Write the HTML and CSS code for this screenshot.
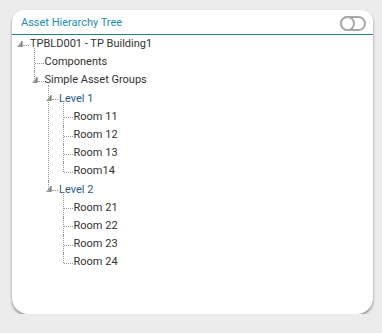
FILE: index.html
```html
<!DOCTYPE html>
<html lang="en">
<head>
  <meta charset="UTF-8" />
  <meta name="viewport" content="width=device-width, initial-scale=1.0"/>
  <title>Asset Hierarchy Tree</title>
  <link rel="stylesheet" href="styles.css">
</head>
<body>

  <div class="card">
    <div class="card-head">
      <span class="card-title">Asset Hierarchy Tree</span>
      <span class="toggle"><span class="knob"></span></span>
    </div>

    <ul class="tree">
      <li>
        <div class="row"><span class="twig"><svg class="exp" width="6" height="6" viewBox="0 0 6 6"><polygon points="5,0 5,6 0,6" fill="#9a9a9a"/><rect x="4.5" y="0" width="1" height="6" fill="#666"/></svg></span><span class="label">TPBLD001 - TP Building1</span></div>
        <ul>
          <li><div class="row"><span class="twig leaf"></span><span class="label">Components</span></div></li>
          <li>
            <div class="row"><span class="twig"><svg class="exp" width="6" height="6" viewBox="0 0 6 6"><polygon points="5,0 5,6 0,6" fill="#9a9a9a"/><rect x="4.5" y="0" width="1" height="6" fill="#666"/></svg></span><span class="label">Simple Asset Groups</span></div>
            <ul>
              <li>
                <div class="row"><span class="twig"><svg class="exp" width="6" height="6" viewBox="0 0 6 6"><polygon points="5,0 5,6 0,6" fill="#9a9a9a"/><rect x="4.5" y="0" width="1" height="6" fill="#666"/></svg></span><span class="label level">Level 1</span></div>
                <ul>
                  <li><div class="row"><span class="twig leaf"></span><span class="label">Room 11</span></div></li>
                  <li><div class="row"><span class="twig leaf"></span><span class="label">Room 12</span></div></li>
                  <li><div class="row"><span class="twig leaf"></span><span class="label">Room 13</span></div></li>
                  <li><div class="row"><span class="twig leaf"></span><span class="label">Room14</span></div></li>
                </ul>
              </li>
              <li>
                <div class="row"><span class="twig"><svg class="exp" width="6" height="6" viewBox="0 0 6 6"><polygon points="5,0 5,6 0,6" fill="#9a9a9a"/><rect x="4.5" y="0" width="1" height="6" fill="#666"/></svg></span><span class="label level">Level 2</span></div>
                <ul>
                  <li><div class="row"><span class="twig leaf"></span><span class="label">Room 21</span></div></li>
                  <li><div class="row"><span class="twig leaf"></span><span class="label">Room 22</span></div></li>
                  <li><div class="row"><span class="twig leaf"></span><span class="label">Room 23</span></div></li>
                  <li><div class="row"><span class="twig leaf"></span><span class="label">Room 24</span></div></li>
                </ul>
              </li>
            </ul>
          </li>
        </ul>
      </li>
    </ul>
  </div>

</body>
</html>
```

FILE: styles.css
```css
* {
  box-sizing: border-box;
}

body {
  margin: 0;
  padding: 10px 9px 0 12px;
  background: #ececec;
  font-family: Roboto, 'Liberation Sans', sans-serif;
  color: #333;
}

.card {
  width: 361px;
  height: 304px;
  background: #fff;
  border-radius: 12px 12px 16px 16px;
  box-shadow: 0 2px 3px rgba(0, 0, 0, 0.4);
}

.card-head {
  height: 25px;
  display: flex;
  justify-content: space-between;
  align-items: center;
  padding: 0 7px 0 9px;
  border-bottom: 1px solid #237e93;
}

.card-title {
  font-size: 11px;
  color: #1d8db0;
}

/* interrupteur inactif */
.toggle {
  width: 26px;
  height: 15px;
  border: 2px solid #a8a8a8;
  border-radius: 8px;
  display: flex;
  margin-top: 2px;
}

.knob {
  width: 15px;
  height: 15px;
  margin: -2px 0 0 -2px;
  border: 2px solid #a8a8a8;
  border-radius: 50%;
  background: #fff;
}

.tree, .tree ul {
  list-style: none;
  margin: 0;
  padding: 0;
}

.tree {
  padding: 0 0 0 5px;
  font-size: 11px;
}

.tree ul {
  padding-left: 14.5px;
}

.tree li {
  position: relative;
}

/* trait vertical pointillé */
.tree ul > li::before {
  content: "";
  position: absolute;
  left: 2px;
  top: 0;
  bottom: 0;
  border-left: 1px dotted #999;
}

.tree ul > li:first-child::before {
  top: -5px;
}

.tree ul > li:last-child::before {
  bottom: auto;
  height: 10px;
}

.row {
  height: 18.2px;
  display: flex;
  align-items: center;
  white-space: nowrap;
}

.twig {
  width: 13px;
  flex: none;
  display: flex;
  align-items: center;
  padding-top: 2px;
}

.twig::after {
  content: "";
  flex: 1;
  margin-right: 1px;
  border-top: 1px dotted #999;
}

.twig.leaf {
  padding-left: 3px;
}

.exp {
  display: block;
  margin-top: -3px;
}

.label {
  line-height: 18px;
}

.level {
  color: #2d5a8a;
}
```
